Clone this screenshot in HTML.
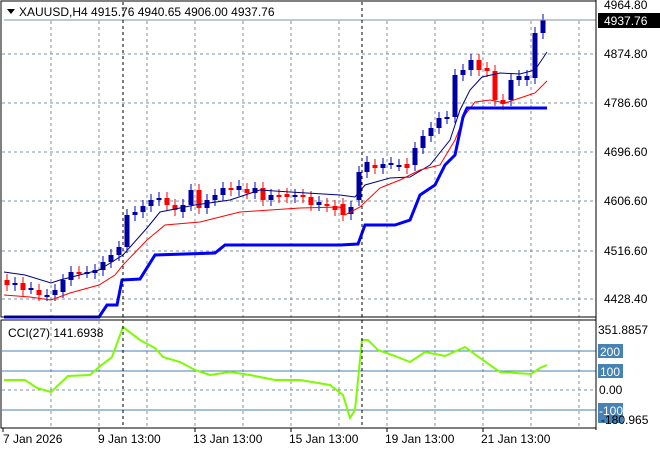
<!DOCTYPE html>
<html><head><meta charset="utf-8"><style>
body{margin:0;background:#fff;width:660px;height:450px;overflow:hidden;font-family:"Liberation Sans",sans-serif}
svg text{font-family:"Liberation Sans",sans-serif;font-size:12px}
</style></head><body>
<svg id="s" width="660" height="450" xmlns="http://www.w3.org/2000/svg">
<rect width="660" height="450" fill="#fff"/>
<g id="grid" stroke="#8090a0" stroke-dasharray="3,3" stroke-width="1"></g>
<g id="c"></g>
<polyline fill="none" stroke="#000080" stroke-width="1" points="4,272 25,275 51,283 60,280 99,270 123,255 147,228 160,212 195,205 230,200 260,190 290,192 340,195 355,197 365,185 390,178 410,177 430,165 450,140 460,110 470,90 482,77 500,73 520,74 535,70 547,52"/>
<polyline fill="none" stroke="#ff0000" stroke-width="1" points="4,295 30,297 51,300 70,293 99,285 115,275 123,265 147,240 165,225 200,222 240,212 270,210 300,208 340,207 345,215 360,207 380,188 400,180 420,170 440,165 455,140 465,115 475,102 490,100 505,103 520,98 535,93 547,81"/>
<polyline fill="none" stroke="#0000ff" stroke-width="3" points="4,317 99,317 107,305 117,305 122,280 140,279 155,255 215,253 225,245 340,245 358,244 365,225 395,225 410,220 420,195 435,185 445,165 455,155 463,117 467,108 547,108"/>
<line x1="4" y1="20" x2="596" y2="20" stroke="#8090a0"/>
<rect x="1" y="1" width="595" height="316" fill="none" stroke="#000"/>
<rect x="1" y="320" width="595" height="108" fill="none" stroke="#000"/>
<g stroke="#4682b4"><line x1="2" y1="351" x2="596" y2="351"/><line x1="2" y1="371" x2="596" y2="371"/><line x1="2" y1="410" x2="596" y2="410"/></g>
<polyline fill="none" stroke="#7cfc00" stroke-width="2" points="4,380 25,380 37,388 51,392 68,376 90,375 99,367 112,357 123,327 140,340 155,348 163,357 180,362 195,370 210,375 230,372 250,375 275,380 300,380 330,385 343,395 350,418 355,410 362,340 368,340 378,350 395,356 410,362 425,352 445,356 465,347 480,358 500,372 531,374 540,368 547,365"/>
<g stroke="#000" stroke-dasharray="3,3"><line x1="123" y1="2" x2="123" y2="428"/><line x1="362" y1="2" x2="362" y2="428"/></g>
<polygon points="7,9 15,9 11,14" fill="#000"/>
<text x="19" y="16">XAUUSD,H4  4915.76 4940.65 4906.00 4937.76</text>
<text x="8" y="337">CCI(27) 141.6938</text>
<g fill="#000">
<text x="604" y="9">4964.80</text>
<text x="604" y="58">4874.80</text>
<text x="604" y="107">4786.60</text>
<text x="604" y="156">4696.60</text>
<text x="604" y="205">4606.60</text>
<text x="604" y="255">4516.60</text>
<text x="604" y="303">4428.40</text>
<text x="598" y="334">351.8857</text>
<text x="599" y="394">0.00</text>
</g>
<rect x="598" y="13" width="62" height="15" fill="#000"/><text x="604" y="25" fill="#fff">4937.76</text>
<rect x="598" y="344" width="25" height="14" fill="#4682b4"/><text x="600" y="356" fill="#fff">200</text>
<rect x="598" y="364" width="25" height="14" fill="#4682b4"/><text x="600" y="376" fill="#fff">100</text>
<rect x="598" y="403" width="25" height="20" fill="#4682b4"/><text x="599" y="415" fill="#fff">-100</text>
<text x="601" y="424" fill="#000">-180.965</text>
<g stroke="#000"><line x1="596" y1="0" x2="596" y2="430"/></g>
<g id="dl" stroke="#000"></g>
<g fill="#000">
<text x="3" y="443">7 Jan 2026</text>
<text x="98" y="443">9 Jan 13:00</text>
<text x="193" y="443">13 Jan 13:00</text>
<text x="289" y="443">15 Jan 13:00</text>
<text x="385" y="443">19 Jan 13:00</text>
<text x="481" y="443">21 Jan 13:00</text>
</g>
</svg>
<script>
var NS="http://www.w3.org/2000/svg";
function el(p,t,a){var e=document.createElementNS(NS,t);for(var k in a)e.setAttribute(k,a[k]);p.appendChild(e);return e;}
var g=document.getElementById('grid');
[51,99,147,195,243,291,339,387,435,483,531,579].forEach(function(x){el(g,'line',{x1:x,y1:21,x2:x,y2:317});el(g,'line',{x1:x,y1:321,x2:x,y2:428});});
[54,103,152,201,251,299].forEach(function(y){el(g,'line',{x1:2,y1:y,x2:596,y2:y});});
el(g,'line',{x1:2,y1:390,x2:596,y2:390});
var d=document.getElementById('dl');
[3,99,195,291,387,483].forEach(function(x){el(d,'line',{x1:x,y1:428,x2:x,y2:432});});
var cl=[[7,280,285],[15,285,283],[23,283,290],[31,288,288],[39,290,295],[47,295,295],[55,295,290],[63,292,280],[71,280,272],[79,272,273],[87,272,272],[95,273,270],[103,270,262],[111,262,255],[119,255,247],[127,247,215],[135,215,212],[143,212,206],[151,206,200],[159,200,198],[167,198,205],[175,205,210],[183,212,205],[191,205,190],[199,190,208],[207,208,200],[215,200,195],[223,195,188],[231,188,190],[239,190,186],[247,189,193],[255,193,188],[263,188,200],[271,200,195],[279,195,197],[287,194,197],[295,197,195],[303,195,197],[311,197,205],[319,205,202],[327,204,206],[335,206,210],[343,204,215],[351,214,207],[359,200,172],[367,172,162],[375,165,168],[383,168,164],[391,163,163],[399,165,165],[407,164,168],[415,165,148],[423,148,136],[431,136,128],[439,128,118],[447,118,117],[455,117,75],[463,75,70],[471,70,60],[479,60,70],[487,68,71],[495,71,100],[503,100,104],[511,100,80],[519,80,76],[527,80,76],[535,78,33],[543,33,20]];
var c=document.getElementById('c');
cl.forEach(function(a){var x=a[0],o=a[1],cc=a[2];var up=cc<=o;var col=up?'#0000a0':'#ff0000';var t=Math.min(o,cc),b=Math.max(o,cc);
el(c,'line',{x1:x,y1:t-6,x2:x,y2:b+6,stroke:up?'#0000c0':'#ff0000'});
el(c,'rect',{x:x-2.5,y:t,width:5,height:Math.max(b-t,2),fill:col});});
</script>
</body></html>
